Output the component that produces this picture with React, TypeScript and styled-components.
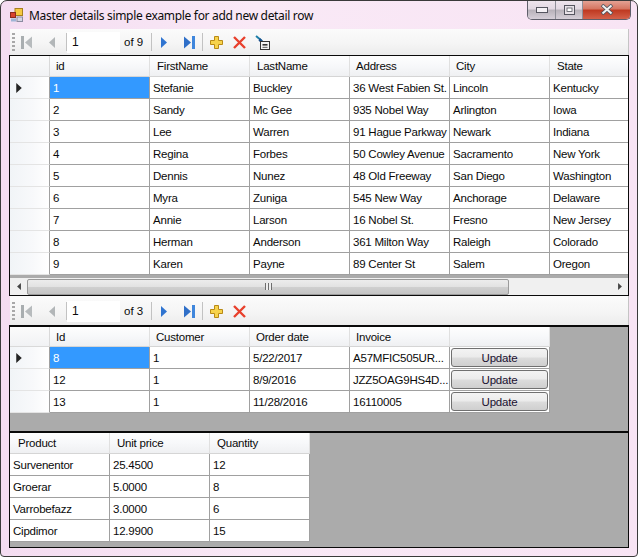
import React from "react";
import styled, { createGlobalStyle } from "styled-components";

const customers = [
  ["1", "Stefanie", "Buckley", "36 West Fabien St.", "Lincoln", "Kentucky"],
  ["2", "Sandy", "Mc Gee", "935 Nobel Way", "Arlington", "Iowa"],
  ["3", "Lee", "Warren", "91 Hague Parkway", "Newark", "Indiana"],
  ["4", "Regina", "Forbes", "50 Cowley Avenue", "Sacramento", "New York"],
  ["5", "Dennis", "Nunez", "48 Old Freeway", "San Diego", "Washington"],
  ["6", "Myra", "Zuniga", "545 New Way", "Anchorage", "Delaware"],
  ["7", "Annie", "Larson", "16 Nobel St.", "Fresno", "New Jersey"],
  ["8", "Herman", "Anderson", "361 Milton Way", "Raleigh", "Colorado"],
  ["9", "Karen", "Payne", "89 Center St", "Salem", "Oregon"],
];
const orders = [
  ["8", "1", "5/22/2017", "A57MFIC505UR..."],
  ["12", "1", "8/9/2016", "JZZ5OAG9HS4D..."],
  ["13", "1", "11/28/2016", "16110005"],
];
const details = [
  ["Survenentor", "25.4500", "12"],
  ["Groerar", "5.0000", "8"],
  ["Varrobefazz", "3.0000", "6"],
  ["Cipdimor", "12.9900", "15"],
];

const Global = createGlobalStyle`
  html, body { margin: 0; padding: 0; background: #fff; }
  * { box-sizing: border-box; }
`;

const Window = styled.div`
  position: relative;
  width: 638px;
  height: 557px;
  padding: 0 8px;
  overflow: hidden;
  background: linear-gradient(90deg, #f4dcf1 0%, #f9e9f6 40%, #f8e4f4 100%);
  border: 1px solid #3a3a3a;
  border-radius: 7px 7px 4px 4px;
  font-family: "Liberation Sans", Arial, sans-serif;
  font-size: 11.5px;
  letter-spacing: -0.22px;
  color: #0a0a0a;
`;

const TitleBar = styled.div`
  display: flex;
  align-items: center;
  gap: 6px;
  height: 28px;
  padding: 0 0 0 1px;
  margin-right: -8px;
`;

const Title = styled.span`
  font-family: "Noto Sans", sans-serif;
  font-size: 12px;
  letter-spacing: -0.32px;
  color: #0c0c0c;
`;

const Controls = styled.div`
  position: absolute;
  top: -1px;
  right: 6px;
  display: flex;
  height: 20px;
  border: 1px solid #5f5f6a;
  border-top: none;
  border-radius: 0 0 5px 5px;
  overflow: hidden;
`;

const ControlButton = styled.div<{ $close?: boolean; $width: number }>`
  display: flex;
  align-items: center;
  justify-content: center;
  width: ${(p) => p.$width}px;
  border-right: ${(p) => (p.$close ? "none" : "1px solid #8f8f98")};
  background: ${(p) =>
    p.$close
      ? "linear-gradient(180deg, #e6a79a 0%, #d67763 45%, #bf3a22 55%, #d4614a 100%)"
      : "linear-gradient(180deg, #efe6ee 0%, #e2d8e2 45%, #b9b3bb 55%, #d6cfd8 100%)"};
`;

const Toolbar = styled.div<{ $height: number; $drop: number }>`
  display: flex;
  align-items: center;
  height: ${(p) => p.$height}px;
  margin-left: 1px;
  padding: ${(p) => p.$drop}px 0 0 2px;
  background: linear-gradient(180deg, #fbfbfb 0%, #f5f5f5 55%, #ececec 100%);
  border-right: 1px solid #c4c4c4;
`;

const Grip = styled.div`
  width: 3px;
  height: 18px;
  margin-right: 1px;
  background: repeating-linear-gradient(180deg, #a8a8a8 0 2px, transparent 2px 4px);
`;

const ToolButton = styled.div<{ $width: number }>`
  display: flex;
  align-items: center;
  justify-content: center;
  flex: none;
  width: ${(p) => p.$width}px;
  height: 18px;
`;

const Separator = styled.div`
  flex: none;
  width: 1px;
  height: 18px;
  background: #c2c2c2;
`;

const PositionInput = styled.div`
  flex: none;
  width: 53px;
  height: 21px;
  padding: 3px 0 0 5px;
  background: #fff;
  font-size: 12px;
`;

const CountLabel = styled.span`
  flex: none;
  width: 31px;
  padding-left: 4px;
  font-size: 11.5px;
  letter-spacing: 0;
`;

const GridPanel = styled.div<{ $height: number; $top: number; $bottom?: number }>`
  display: flex;
  flex-direction: column;
  height: ${(p) => p.$height}px;
  background: #ababab;
  border-style: solid;
  border-color: #0a0a0a;
  border-width: ${(p) => p.$top}px 1px ${(p) => p.$bottom ?? 0}px 1px;
  overflow: hidden;
`;

const Row = styled.div<{ $height: number }>`
  display: flex;
  flex: none;
  height: ${(p) => p.$height}px;
`;

const Corner = styled.div`
  flex: none;
  width: 40px;
  background: linear-gradient(180deg, #fbfbfb 0%, #f1f2f4 100%);
  border-right: 1px solid #d9d9d9;
  border-bottom: 1px solid #d9d9d9;
`;

const RowHead = styled(Corner)`
  display: flex;
  align-items: center;
  padding-left: 6px;
  background: linear-gradient(90deg, #f1f4f7 0%, #f8f9fb 60%, #fff 100%);
  border-right: 1px solid #a0a0a0;
  border-bottom: 1px solid #e4e4e4;
`;

const HeadCell = styled.div<{ $width: number; $indent: number }>`
  flex: none;
  width: ${(p) => p.$width}px;
  padding: 4px 0 0 ${(p) => p.$indent}px;
  background: linear-gradient(180deg, #fefefe 0%, #f7f8fa 50%, #eff0f2 100%);
  border-right: 1px solid #e0e0e0;
  border-bottom: 1px solid #d5d5d5;
  white-space: nowrap;
  overflow: hidden;
`;

const Cell = styled.div<{ $width: number; $selected?: boolean }>`
  flex: none;
  width: ${(p) => p.$width}px;
  padding: 5px 0 0 3px;
  background: ${(p) => (p.$selected ? "#3399ff" : "#fff")};
  color: ${(p) => (p.$selected ? "#fff" : "#0a0a0a")};
  border-right: 1px solid #a0a0a0;
  border-bottom: 1px solid #a0a0a0;
  white-space: nowrap;
  overflow: hidden;
`;

const ButtonCell = styled(Cell)`
  padding: 1px 1px 1px 1px;
`;

const UpdateButton = styled.div`
  height: 19px;
  padding-top: 3px;
  text-align: center;
  color: #1a1030;
  background: linear-gradient(180deg, #f3f3f3 0%, #ebebeb 48%, #dcdcdc 52%, #cfcfcf 100%);
  border: 1px solid #707070;
  border-radius: 3px;
`;

const Filler = styled.div`
  flex: 1;
`;

const ScrollBar = styled.div`
  display: flex;
  flex: none;
  align-items: center;
  height: 17px;
  margin-top: 3px;
  background: #f0f0f0;
`;

const ScrollArrow = styled.div`
  display: flex;
  flex: none;
  align-items: center;
  justify-content: center;
  width: 17px;
  height: 100%;
`;

const ScrollThumb = styled.div`
  display: flex;
  align-items: center;
  justify-content: center;
  width: 482px;
  height: 16px;
  background: linear-gradient(180deg, #ececec 0%, #e2e2e2 48%, #cfcfcf 52%, #c4c4c4 100%);
  border: 1px solid #9a9a9a;
  border-radius: 2px;
`;

const ThumbGrip = styled.span`
  width: 7px;
  height: 7px;
  background: repeating-linear-gradient(90deg, #6e6e6e 0 1px, #eee 1px 3px);
`;

const Tri = ({ dir, color, w = 6, h = 11 }: { dir: "l" | "r"; color: string; w?: number; h?: number }) => (
  <svg width={w} height={h} viewBox="0 0 6 11">
    <path d={dir === "r" ? "M0 0 L6 5.5 L0 11 Z" : "M6 0 L0 5.5 L6 11 Z"} fill={color} />
  </svg>
);

const FirstIcon = () => (
  <svg width="11" height="13" viewBox="0 0 11 13">
    <rect x="0" y="0" width="3" height="13" fill="#a9aeb0" />
    <path d="M11 0.5 L4 6.5 L11 12.5 Z" fill="#b7bbbd" />
  </svg>
);

const LastIcon = () => (
  <svg width="11" height="13" viewBox="0 0 11 13">
    <path d="M0 0.5 L7 6.5 L0 12.5 Z" fill="#2f6fc8" />
    <rect x="8" y="0" width="3" height="13" fill="#3f86dc" />
  </svg>
);

const AddIcon = () => (
  <svg width="13" height="13" viewBox="0 0 13 13">
    <path d="M4.5 0.5 H8.5 V4.5 H12.5 V8.5 H8.5 V12.5 H4.5 V8.5 H0.5 V4.5 H4.5 Z" fill="#f7d34c" stroke="#b98a16" />
  </svg>
);

const DeleteIcon = () => (
  <svg width="13" height="13" viewBox="0 0 13 13">
    <path d="M1 1 L12 12 M12 1 L1 12" stroke="#e8402c" strokeWidth="2.4" />
  </svg>
);

const SaveIcon = () => (
  <svg width="15" height="15" viewBox="0 0 15 15">
    <path d="M1 1 L7 6" stroke="#1d7fa8" strokeWidth="2" />
    <path d="M5 3 L9 7 L7 9 L3.5 5.5 Z" fill="#1a4f8c" />
    <rect x="5.5" y="6.5" width="9" height="8" fill="#f4f4f4" stroke="#333" />
    <rect x="7.5" y="9" width="5" height="1.6" fill="#333" />
    <rect x="7.5" y="11.8" width="5" height="1.2" fill="#777" />
  </svg>
);

const AppIcon = () => (
  <svg width="13" height="14" viewBox="0 0 13 14">
    <rect x="5" y="0.5" width="7.5" height="7" fill="#f5c842" stroke="#a8801e" />
    <rect x="0.5" y="4.5" width="5" height="5" fill="#d8412f" stroke="#8c2a1f" />
    <rect x="1" y="10.5" width="5" height="3" fill="#9fb5d6" />
    <rect x="7" y="9" width="5.5" height="4.5" fill="#d6d6e4" stroke="#8b8ba0" />
  </svg>
);

const Pager = ({ count, save, height, drop = 0 }: { count: number; save?: boolean; height: number; drop?: number }) => (
  <Toolbar $height={height} $drop={drop}>
    <Grip />
    <ToolButton $width={21}><FirstIcon /></ToolButton>
    <ToolButton $width={29}><Tri dir="l" color="#b2b6b8" /></ToolButton>
    <Separator />
    <PositionInput>1</PositionInput>
    <CountLabel>of {count}</CountLabel>
    <Separator />
    <ToolButton $width={24}><Tri dir="r" color="#2f74d0" /></ToolButton>
    <ToolButton $width={26}><LastIcon /></ToolButton>
    <Separator />
    <ToolButton $width={27}><AddIcon /></ToolButton>
    <ToolButton $width={18}><DeleteIcon /></ToolButton>
    {save && <ToolButton $width={28}><SaveIcon /></ToolButton>}
  </Toolbar>
);

const HeaderRow = ({ labels, indents, widths, height, corner = true }: {
  labels: string[]; indents: number[]; widths: number[]; height: number; corner?: boolean;
}) => (
  <Row $height={height}>
    {corner && <Corner />}
    {labels.map((label, i) => (
      <HeadCell key={i} $width={widths[i]} $indent={indents[i]}>{label}</HeadCell>
    ))}
  </Row>
);

const CurrentMark = () => <Tri dir="r" color="#222" w={6} h={10} />;

const customerWidths = [100, 100, 100, 100, 100, 80];
const orderWidths = [100, 100, 100, 100, 100];
const detailWidths = [100, 100, 100];

export default function App() {
  return (
    <Window>
      <Global />
      <TitleBar>
        <AppIcon />
        <Title>Master details simple example for add new detail row</Title>
      </TitleBar>
      <Controls>
        <ControlButton $width={28}>
          <svg width="12" height="6" viewBox="0 0 12 6"><rect x="0.5" y="0.5" width="11" height="5" fill="#f4f0f4" stroke="#55555f" /></svg>
        </ControlButton>
        <ControlButton $width={27}>
          <svg width="11" height="10" viewBox="0 0 11 10"><rect x="0.5" y="0.5" width="10" height="9" fill="#e8e2e8" stroke="#55555f" /><rect x="3" y="3" width="5" height="3.5" fill="#fff" stroke="#55555f" strokeWidth="0.8" /></svg>
        </ControlButton>
        <ControlButton $width={47} $close>
          <svg width="14" height="11" viewBox="0 0 14 11"><path d="M2 1 L12 10 M12 1 L2 10" stroke="#4d5560" strokeWidth="3.6" /><path d="M2.5 1.5 L11.5 9.5 M11.5 1.5 L2.5 9.5" stroke="#f2f2f2" strokeWidth="2" /></svg>
        </ControlButton>
      </Controls>

      <Pager count={9} save height={26} />
      <GridPanel $height={241} $top={1} $bottom={1}>
        <HeaderRow
          labels={["id", "FirstName", "LastName", "Address", "City", "State"]}
          indents={[6, 7, 7, 6, 6, 7]}
          widths={customerWidths}
          height={21}
        />
        {customers.map((row, r) => (
          <Row key={r} $height={22}>
            <RowHead>{r === 0 && <CurrentMark />}</RowHead>
            {row.map((value, c) => (
              <Cell key={c} $width={customerWidths[c]} $selected={r === 0 && c === 0}>{value}</Cell>
            ))}
          </Row>
        ))}
        <ScrollBar>
          <ScrollArrow><Tri dir="l" color="#444" w={4} h={7} /></ScrollArrow>
          <ScrollThumb><ThumbGrip /></ScrollThumb>
          <Filler />
          <ScrollArrow><Tri dir="r" color="#444" w={4} h={7} /></ScrollArrow>
        </ScrollBar>
      </GridPanel>

      <Pager count={3} height={29} drop={1} />
      <GridPanel $height={106} $top={2}>
        <HeaderRow
          labels={["Id", "Customer", "Order date", "Invoice", ""]}
          indents={[6, 6, 6, 6, 0]}
          widths={orderWidths}
          height={20}
        />
        {orders.map((row, r) => (
          <Row key={r} $height={22}>
            <RowHead>{r === 0 && <CurrentMark />}</RowHead>
            {row.map((value, c) => (
              <Cell key={c} $width={orderWidths[c]} $selected={r === 0 && c === 0}>{value}</Cell>
            ))}
            <ButtonCell $width={100}><UpdateButton>Update</UpdateButton></ButtonCell>
          </Row>
        ))}
      </GridPanel>

      <GridPanel $height={117} $top={2} $bottom={1}>
        <HeaderRow
          labels={["Product", "Unit price", "Quantity"]}
          indents={[8, 7, 7]}
          widths={detailWidths}
          height={21}
          corner={false}
        />
        {details.map((row, r) => (
          <Row key={r} $height={22}>
            {row.map((value, c) => (
              <Cell key={c} $width={detailWidths[c]}>{value}</Cell>
            ))}
          </Row>
        ))}
      </GridPanel>
    </Window>
  );
}
